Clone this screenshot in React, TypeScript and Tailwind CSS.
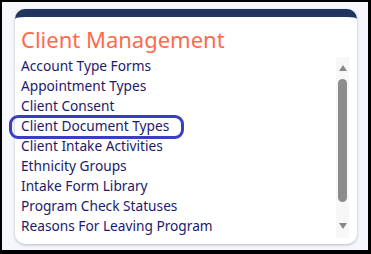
const items = [
  "Account Type Forms",
  "Appointment Types",
  "Client Consent",
  "Client Document Types",
  "Client Intake Activities",
  "Ethnicity Groups",
  "Intake Form Library",
  "Program Check Statuses",
  "Reasons For Leaving Program",
];

export default function App() {
  return (
    <div className="h-[254px] w-[371px] overflow-hidden border-t-2 border-l-2 border-r-[3px] border-b-[4px] border-black bg-[#f5f7fd] font-['Noto_Sans',sans-serif]">
      <div className="relative ml-[13px] mt-[7px] h-[235px] w-[342px] overflow-hidden rounded-[10px] border-t-[8px] border-[#1f355f] bg-white shadow-[0_1px_3px_rgba(0,0,0,0.25)]">
        <h2 className="px-[6px] pt-[7px] text-[22px] leading-[30px] text-[#ff6a4f]">
          Client Management
        </h2>
        <div className="mt-[2px] flex pr-[8px]">
          <ul className="flex-1 px-[6px]">
            {items.map((item) => (
              <li
                key={item}
                className="h-[20px] text-[13.7px] leading-[20px] text-[#1c1a6c]">
                {item}
              </li>
            ))}
          </ul>
          <div className="mt-[1px] flex h-[181px] w-[13px] flex-col items-center bg-[#f7f7f7]">
            <div className="mt-[8px] h-0 w-0 border-x-[4.5px] border-b-[6px] border-x-transparent border-b-[#888]" />
            <div className="mt-[8px] h-[123px] w-[9px] rounded-full bg-[#8c8c8c]" />
            <div className="mt-[21px] h-0 w-0 border-x-[4.5px] border-t-[6px] border-x-transparent border-t-[#888]" />
          </div>
        </div>
      </div>
      {/* hand-drawn highlight around the selected row */}
      <div className="pointer-events-none absolute left-[9px] top-[115px] h-[24px] w-[175px] rounded-[9px] border-[3px] border-[#3a3fbf]" />
    </div>
  );
}
